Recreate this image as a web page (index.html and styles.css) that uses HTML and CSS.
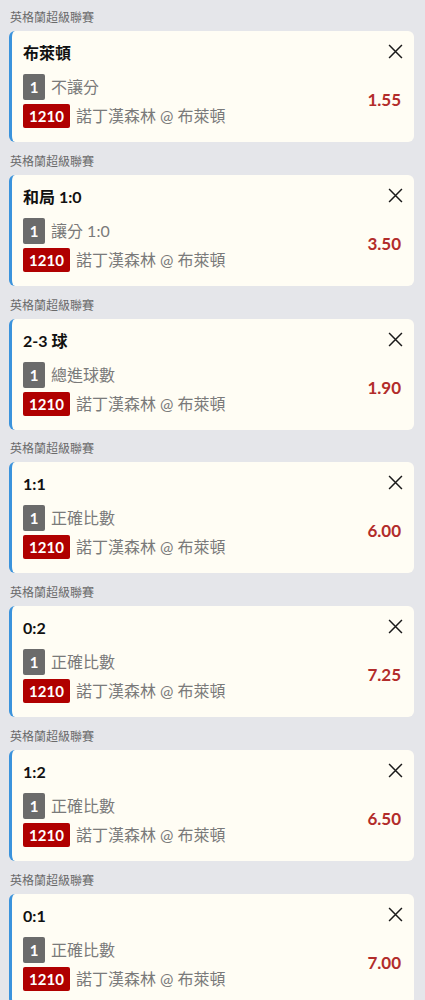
FILE: index.html
```html
<!DOCTYPE html>
<html lang="zh-Hant">
<head>
<meta charset="utf-8">
<title>Bet slip</title>
<link rel="stylesheet" href="styles.css">
</head>
<body>
<div class="list">
  <section class="item">
    <div class="league">英格蘭超級聯賽</div>
    <div class="card">
      <div class="head"><span class="title">布萊頓</span><span class="close"><svg viewBox="0 0 14 14" width="15" height="15"><path d="M1 1L13 13M13 1L1 13" stroke="#1a1a1a" stroke-width="1.4" fill="none"/></svg></span></div>
      <div class="body">
        <div class="rows">
          <div class="row"><span class="badge grey">1</span><span class="txt">不讓分</span></div>
          <div class="row"><span class="badge red">1210</span><span class="txt">諾丁漢森林 @ 布萊頓</span></div>
        </div>
        <span class="odds">1.55</span>
      </div>
    </div>
  </section>
  <section class="item">
    <div class="league">英格蘭超級聯賽</div>
    <div class="card">
      <div class="head"><span class="title">和局 1:0</span><span class="close"><svg viewBox="0 0 14 14" width="15" height="15"><path d="M1 1L13 13M13 1L1 13" stroke="#1a1a1a" stroke-width="1.4" fill="none"/></svg></span></div>
      <div class="body">
        <div class="rows">
          <div class="row"><span class="badge grey">1</span><span class="txt">讓分 1:0</span></div>
          <div class="row"><span class="badge red">1210</span><span class="txt">諾丁漢森林 @ 布萊頓</span></div>
        </div>
        <span class="odds">3.50</span>
      </div>
    </div>
  </section>
  <section class="item">
    <div class="league">英格蘭超級聯賽</div>
    <div class="card">
      <div class="head"><span class="title">2-3 球</span><span class="close"><svg viewBox="0 0 14 14" width="15" height="15"><path d="M1 1L13 13M13 1L1 13" stroke="#1a1a1a" stroke-width="1.4" fill="none"/></svg></span></div>
      <div class="body">
        <div class="rows">
          <div class="row"><span class="badge grey">1</span><span class="txt">總進球數</span></div>
          <div class="row"><span class="badge red">1210</span><span class="txt">諾丁漢森林 @ 布萊頓</span></div>
        </div>
        <span class="odds">1.90</span>
      </div>
    </div>
  </section>
  <section class="item">
    <div class="league">英格蘭超級聯賽</div>
    <div class="card">
      <div class="head"><span class="title">1:1</span><span class="close"><svg viewBox="0 0 14 14" width="15" height="15"><path d="M1 1L13 13M13 1L1 13" stroke="#1a1a1a" stroke-width="1.4" fill="none"/></svg></span></div>
      <div class="body">
        <div class="rows">
          <div class="row"><span class="badge grey">1</span><span class="txt">正確比數</span></div>
          <div class="row"><span class="badge red">1210</span><span class="txt">諾丁漢森林 @ 布萊頓</span></div>
        </div>
        <span class="odds">6.00</span>
      </div>
    </div>
  </section>
  <section class="item">
    <div class="league">英格蘭超級聯賽</div>
    <div class="card">
      <div class="head"><span class="title">0:2</span><span class="close"><svg viewBox="0 0 14 14" width="15" height="15"><path d="M1 1L13 13M13 1L1 13" stroke="#1a1a1a" stroke-width="1.4" fill="none"/></svg></span></div>
      <div class="body">
        <div class="rows">
          <div class="row"><span class="badge grey">1</span><span class="txt">正確比數</span></div>
          <div class="row"><span class="badge red">1210</span><span class="txt">諾丁漢森林 @ 布萊頓</span></div>
        </div>
        <span class="odds">7.25</span>
      </div>
    </div>
  </section>
  <section class="item">
    <div class="league">英格蘭超級聯賽</div>
    <div class="card">
      <div class="head"><span class="title">1:2</span><span class="close"><svg viewBox="0 0 14 14" width="15" height="15"><path d="M1 1L13 13M13 1L1 13" stroke="#1a1a1a" stroke-width="1.4" fill="none"/></svg></span></div>
      <div class="body">
        <div class="rows">
          <div class="row"><span class="badge grey">1</span><span class="txt">正確比數</span></div>
          <div class="row"><span class="badge red">1210</span><span class="txt">諾丁漢森林 @ 布萊頓</span></div>
        </div>
        <span class="odds">6.50</span>
      </div>
    </div>
  </section>
  <section class="item">
    <div class="league">英格蘭超級聯賽</div>
    <div class="card">
      <div class="head"><span class="title">0:1</span><span class="close"><svg viewBox="0 0 14 14" width="15" height="15"><path d="M1 1L13 13M13 1L1 13" stroke="#1a1a1a" stroke-width="1.4" fill="none"/></svg></span></div>
      <div class="body">
        <div class="rows">
          <div class="row"><span class="badge grey">1</span><span class="txt">正確比數</span></div>
          <div class="row"><span class="badge red">1210</span><span class="txt">諾丁漢森林 @ 布萊頓</span></div>
        </div>
        <span class="odds">7.00</span>
      </div>
    </div>
  </section>
</div>
</body>
</html>
```

FILE: styles.css
```css
* { box-sizing: border-box; }
html, body { margin: 0; padding: 0; }
body {
  background: #e5e6ea;
  font-family: Lato, "Noto Sans CJK TC", sans-serif;
  color: #111;
}
.list {
  display: flex;
  flex-direction: column;
  gap: 11.8px;
  padding: 10px 11px 0 9px;
}
.item {
  display: flex;
  flex-direction: column;
  gap: 5px;
}
.league {
  font-size: 12px;
  line-height: 16px;
  color: #6a6a6a;
  padding-left: 1px;
}
.card {
  height: 111px;
  background: #fffdf4;
  border-left: 3px solid #3b93dc;
  border-radius: 6px;
  padding: 12px 11px 14px 11px;
  display: flex;
  flex-direction: column;
}
.head {
  display: flex;
  justify-content: space-between;
  align-items: center;
  height: 20px;
}
.title {
  font-size: 16px;
  font-weight: 700;
  line-height: 20px;
  color: #111;
}
.close {
  display: flex;
  width: 15px;
  height: 15px;
  margin-top: -3px;
}
.body {
  margin-top: 11px;
  display: flex;
  justify-content: space-between;
  align-items: center;
}
.rows {
  display: flex;
  flex-direction: column;
  gap: 4px;
}
.row {
  display: flex;
  align-items: center;
  gap: 6px;
}
.badge {
  display: flex;
  align-items: center;
  justify-content: center;
  color: #fff;
  font-weight: 700;
  font-size: 15px;
  border-radius: 2px;
}
.badge.grey {
  background: #6b6b6b;
  width: 22px;
  height: 26px;
}
.badge.red {
  background: #b00000;
  height: 24px;
  width: 47px;
}
.txt {
  font-size: 16px;
  font-weight: 400;
  color: #7a7a7a;
  line-height: 20px;
}
.odds {
  font-size: 17px;
  font-weight: 700;
  color: #b22c2a;
  margin-right: 2px;
  margin-top: -3px;
}
```
